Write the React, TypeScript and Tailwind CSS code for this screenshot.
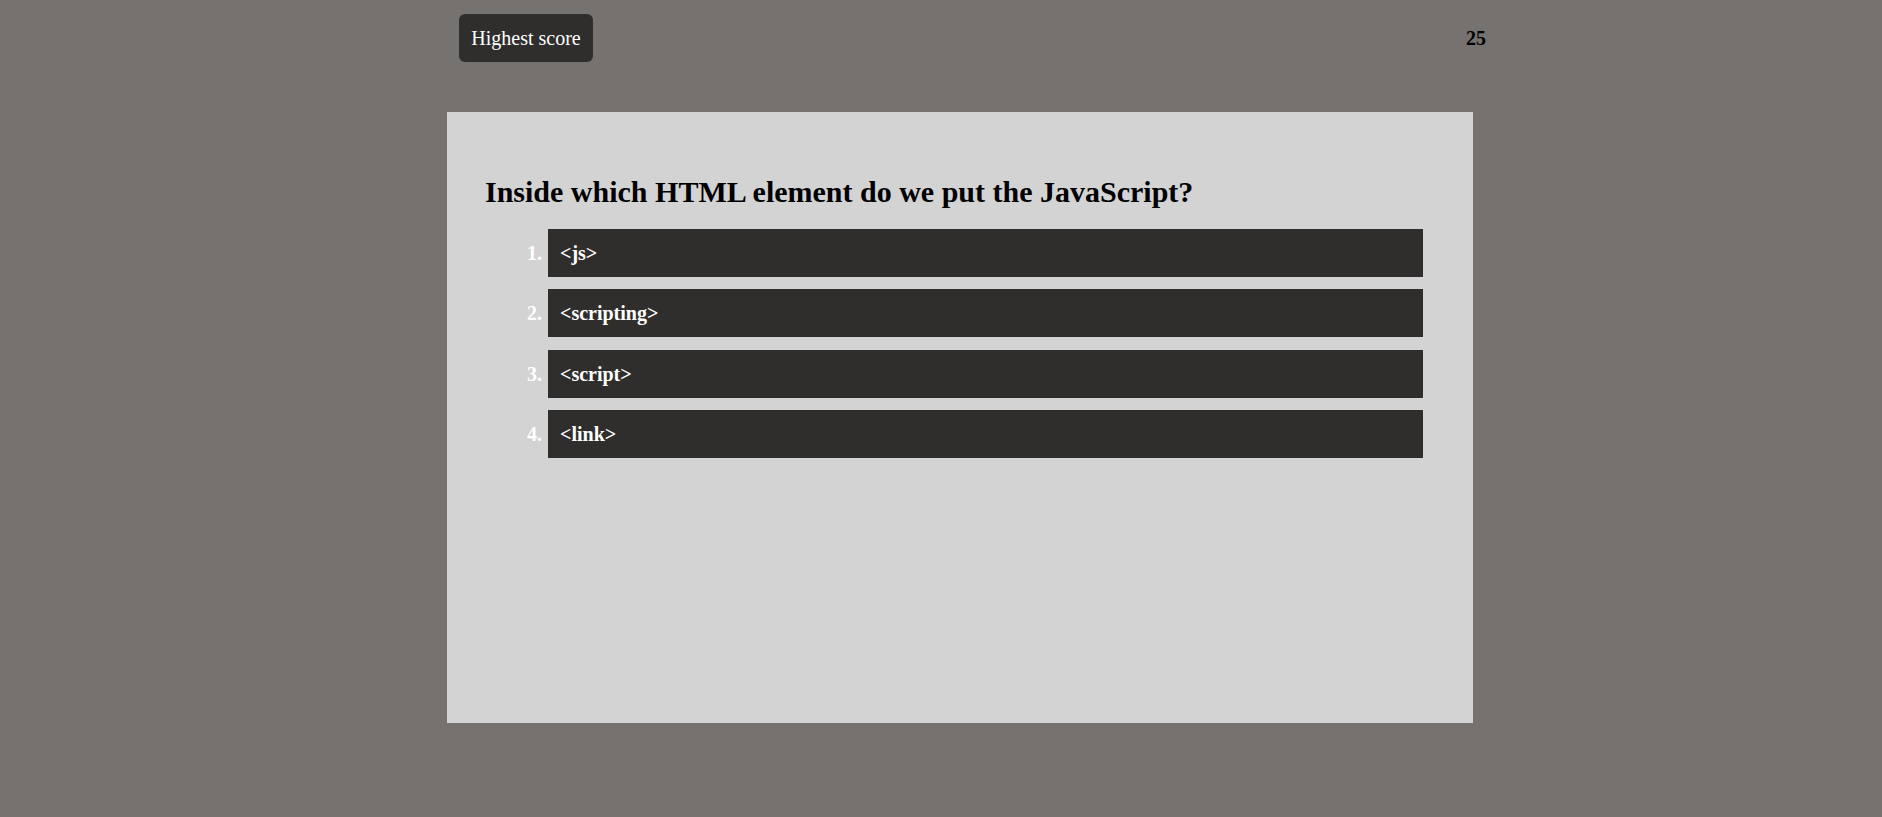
const ANSWERS = ["<js>", "<scripting>", "<script>", "<link>"];

export default function App() {
  return (
    <div className="min-h-screen bg-[#767270] font-['Liberation_Serif',serif]">
      <div className="ml-[447px] w-[1040px]">
        {/* header */}
        <header className="flex items-center justify-between pl-3 pt-[14px]">
          <button className="h-12 w-[134px] rounded-md bg-[#302e2c] text-[20px] text-white">
            Highest score
          </button>
          <span className="pr-[1px] text-[20px] font-bold text-black">25</span>
        </header>

        {/* quiz card */}
        <main className="mt-[50px] h-[611px] w-[1026px] bg-[#d3d3d3] pl-[38px] pr-[50px] pt-[62px]">
          <h2 className="text-[30px] leading-[36px] font-bold text-black">
            Inside which HTML element do we put the JavaScript?
          </h2>
          <ol className="mt-[19px] flex flex-col gap-[12.4px]">
            {ANSWERS.map((a, i) => (
              <li key={a} className="flex items-center">
                <span className="w-[63px] pr-[6px] text-right text-[20px] font-bold text-white">
                  {i + 1}.
                </span>
                <div className="flex h-12 flex-1 items-center bg-[#302e2c] pl-3 text-[20px] font-bold text-white">
                  {a}
                </div>
              </li>
            ))}
          </ol>
        </main>
      </div>
    </div>
  );
}
